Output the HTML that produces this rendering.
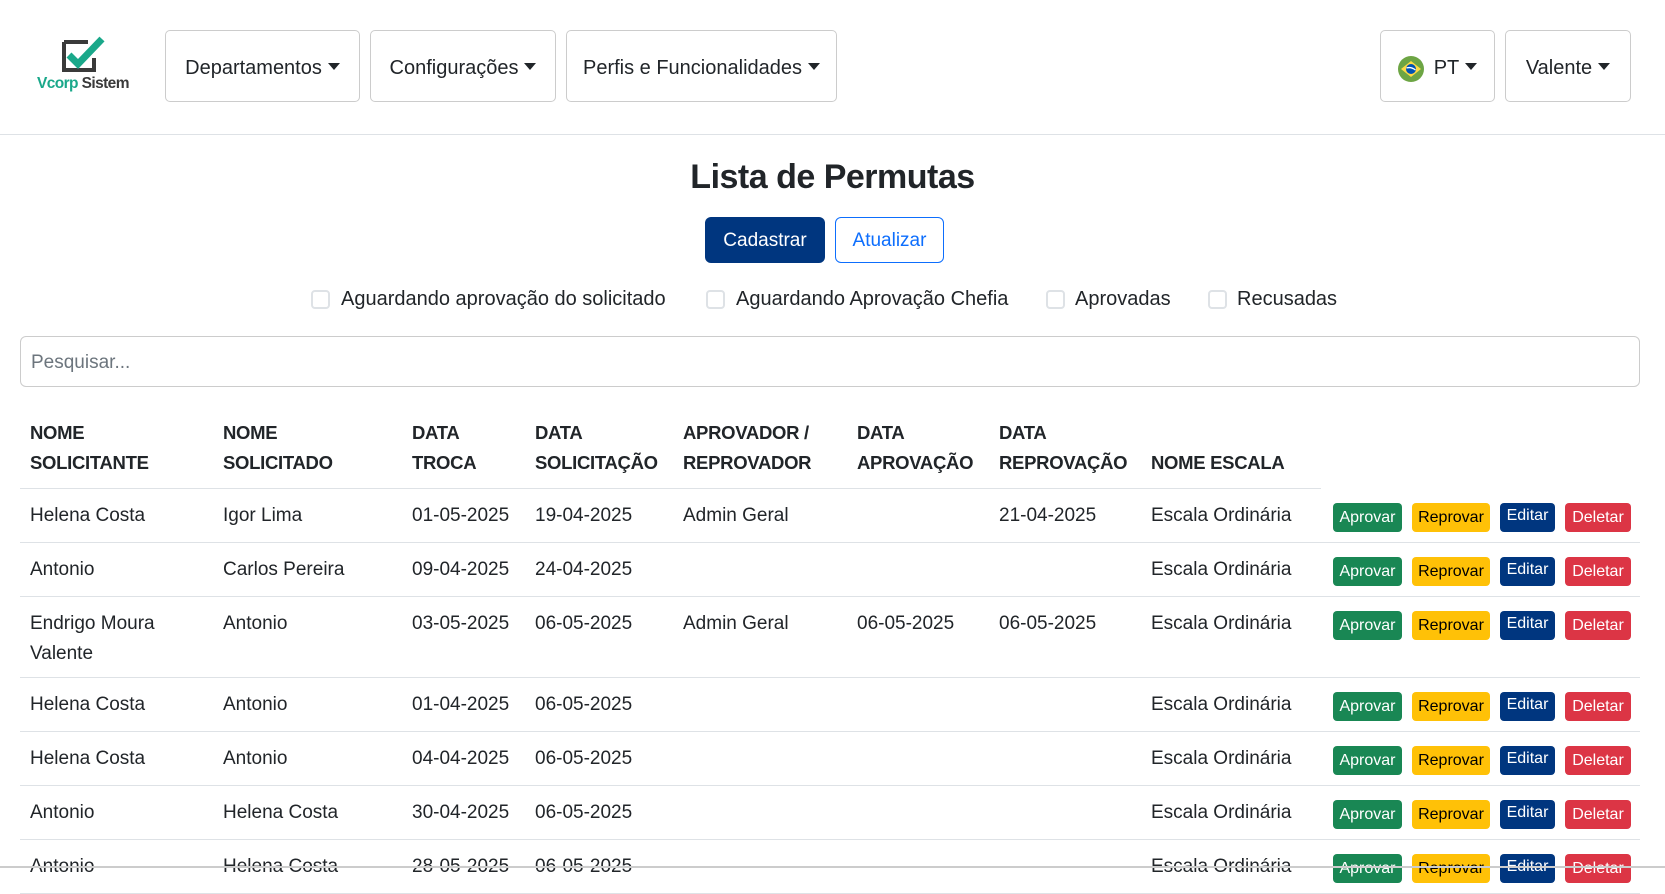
<!DOCTYPE html>
<html><head><meta charset="utf-8">
<style>
*{box-sizing:border-box;margin:0;padding:0}
body{width:1665px;height:868px;overflow:hidden;background:#fff;font-family:"Liberation Sans",sans-serif;color:#212529;position:relative}
.nav{position:absolute;left:0;top:0;width:1665px;height:135px;border-bottom:1px solid #dee2e6}
.nb{position:absolute;top:30px;height:72px;border:1px solid #ccc;border-radius:5px;font-size:20px;display:flex;align-items:center;justify-content:center;color:#212529;padding-top:5px}
.car{display:inline-block;width:0;height:0;border-left:6px solid transparent;border-right:6px solid transparent;border-top:7px solid #212529;margin-left:6px;position:relative;top:-2px}
h1{position:absolute;left:0;width:1665px;text-align:center;top:158px;font-size:34px;letter-spacing:-0.5px;color:#212529;font-weight:bold}
.btn{position:absolute;top:217px;height:46px;border-radius:6px;font-size:19px;display:flex;align-items:center;justify-content:center;padding-top:2px}
.cb{position:absolute;top:290px;width:19px;height:19px;border:2px solid #dee2e6;border-radius:4px}
.cl{position:absolute;top:288px;font-size:20px}
.search{position:absolute;left:20px;top:336px;width:1620px;height:51px;border:1px solid #ccc;border-radius:6px;font-size:19px;color:#6c757d;padding:15px 10px}
table{position:absolute;left:20px;top:406px;width:1620px;border-collapse:collapse;table-layout:fixed;font-size:19px}
th{text-align:left;font-size:18.5px;font-weight:bold;line-height:30px;padding:12px 10px 10px;white-space:nowrap;vertical-align:bottom;border-bottom:1px solid #dee2e6;letter-spacing:-0.3px}
th.na{border-bottom:none}
td{line-height:30px;padding:12px 10px 11px;vertical-align:top;border-bottom:1px solid #dee2e6;white-space:nowrap}
tr.two td{padding-bottom:8px}
td.act{padding:14px 0 0 12px}
.b{display:inline-block;height:29px;line-height:30px;border-radius:4px;font-size:16px;vertical-align:top;text-align:center;margin-right:10px}
.ap{background:#198754;color:#fff;width:69px}
.rp{background:#ffc107;color:#000;width:78px}
.ed{background:#00367f;color:#fff;width:55px;line-height:26px}
.dl{background:#dc3545;color:#fff;width:66px}
.bot{position:absolute;left:0;top:866px;width:1665px;height:2px;background:#ccc}
</style></head><body>
<div class="nav">
 <svg style="position:absolute;left:60px;top:36px" width="48" height="38" viewBox="0 0 48 38">
  <path d="M4 6 H28 M4 6 V34 H34 V22" fill="none" stroke="#3a3a3a" stroke-width="4"/>
  <path d="M9 19 L18 28 L42 3" fill="none" stroke="#1aa88a" stroke-width="7" stroke-linejoin="miter"/>
 </svg>
 <div style="position:absolute;left:37px;top:75px;font-size:15.5px;font-weight:bold;letter-spacing:-0.6px"><span style="color:#1aa88a">Vcorp</span> <span style="color:#3a3a3a">Sistem</span></div>
 <div class="nb" style="left:165px;width:195px">Departamentos<span class="car"></span></div>
 <div class="nb" style="left:370px;width:186px">Configurações<span class="car"></span></div>
 <div class="nb" style="left:566px;width:271px">Perfis e Funcionalidades<span class="car"></span></div>
 <div class="nb" style="left:1380px;width:115px"><svg width="26" height="26" viewBox="0 0 26 26" style="margin-right:10px"><circle cx="13" cy="13" r="13" fill="#6da544"/><path d="M13 5 L23 13 L13 21 L3 13Z" fill="#ffda44"/><circle cx="13" cy="13" r="5" fill="#0052b4"/><path d="M8.5 12 Q13 10.5 17.5 14" stroke="#fff" stroke-width="1.3" fill="none"/></svg>PT<span class="car"></span></div>
 <div class="nb" style="left:1505px;width:126px">Valente<span class="car"></span></div>
</div>
<h1>Lista de Permutas</h1>
<div class="btn" style="left:705px;width:120px;background:#00367f;color:#fff">Cadastrar</div>
<div class="btn" style="left:835px;width:109px;border:1px solid #0d6efd;color:#0d6efd">Atualizar</div>
<div class="cb" style="left:311px"></div><div class="cl" style="left:341px">Aguardando aprovação do solicitado</div>
<div class="cb" style="left:706px"></div><div class="cl" style="left:736px">Aguardando Aprovação Chefia</div>
<div class="cb" style="left:1046px"></div><div class="cl" style="left:1075px">Aprovadas</div>
<div class="cb" style="left:1208px"></div><div class="cl" style="left:1237px">Recusadas</div>
<div class="search">Pesquisar...</div>
<table>
<colgroup><col style="width:193px"><col style="width:189px"><col style="width:123px"><col style="width:148px"><col style="width:174px"><col style="width:142px"><col style="width:152px"><col style="width:180px"><col style="width:319px"></colgroup>
<tr><th>NOME<br>SOLICITANTE</th><th>NOME<br>SOLICITADO</th><th>DATA<br>TROCA</th><th>DATA<br>SOLICITAÇÃO</th><th>APROVADOR /<br>REPROVADOR</th><th>DATA<br>APROVAÇÃO</th><th>DATA<br>REPROVAÇÃO</th><th>NOME ESCALA</th><th class="na"></th></tr>
<tr><td>Helena Costa</td><td>Igor Lima</td><td>01-05-2025</td><td>19-04-2025</td><td>Admin Geral</td><td></td><td>21-04-2025</td><td>Escala Ordinária</td><td class="act"><span class="b ap">Aprovar</span><span class="b rp">Reprovar</span><span class="b ed">Editar</span><span class="b dl">Deletar</span></td></tr>
<tr><td>Antonio</td><td>Carlos Pereira</td><td>09-04-2025</td><td>24-04-2025</td><td></td><td></td><td></td><td>Escala Ordinária</td><td class="act"><span class="b ap">Aprovar</span><span class="b rp">Reprovar</span><span class="b ed">Editar</span><span class="b dl">Deletar</span></td></tr>
<tr class="two"><td>Endrigo Moura<br>Valente</td><td>Antonio</td><td>03-05-2025</td><td>06-05-2025</td><td>Admin Geral</td><td>06-05-2025</td><td>06-05-2025</td><td>Escala Ordinária</td><td class="act"><span class="b ap">Aprovar</span><span class="b rp">Reprovar</span><span class="b ed">Editar</span><span class="b dl">Deletar</span></td></tr>
<tr><td>Helena Costa</td><td>Antonio</td><td>01-04-2025</td><td>06-05-2025</td><td></td><td></td><td></td><td>Escala Ordinária</td><td class="act"><span class="b ap">Aprovar</span><span class="b rp">Reprovar</span><span class="b ed">Editar</span><span class="b dl">Deletar</span></td></tr>
<tr><td>Helena Costa</td><td>Antonio</td><td>04-04-2025</td><td>06-05-2025</td><td></td><td></td><td></td><td>Escala Ordinária</td><td class="act"><span class="b ap">Aprovar</span><span class="b rp">Reprovar</span><span class="b ed">Editar</span><span class="b dl">Deletar</span></td></tr>
<tr><td>Antonio</td><td>Helena Costa</td><td>30-04-2025</td><td>06-05-2025</td><td></td><td></td><td></td><td>Escala Ordinária</td><td class="act"><span class="b ap">Aprovar</span><span class="b rp">Reprovar</span><span class="b ed">Editar</span><span class="b dl">Deletar</span></td></tr>
<tr><td>Antonio</td><td>Helena Costa</td><td>28-05-2025</td><td>06-05-2025</td><td></td><td></td><td></td><td>Escala Ordinária</td><td class="act"><span class="b ap">Aprovar</span><span class="b rp">Reprovar</span><span class="b ed">Editar</span><span class="b dl">Deletar</span></td></tr>
</table>
<div class="bot"></div>
</body></html>
